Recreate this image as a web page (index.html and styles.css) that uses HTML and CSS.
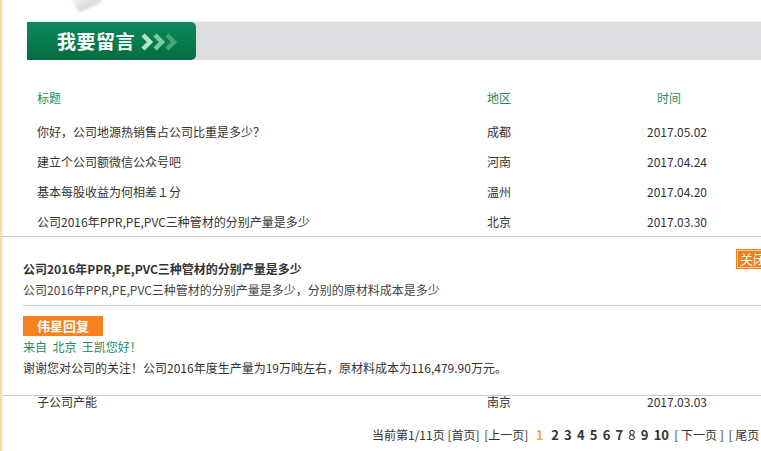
FILE: index.html
```html
<!DOCTYPE html>
<html lang="zh-CN">
<head>
<meta charset="utf-8">
<title>我要留言</title>
<link rel="stylesheet" href="styles.css">
</head>
<body>
<div class="deco-shadow"></div>
<div class="page">
  <div class="title-bar">
    <div class="tab">
      <span class="tab-text">我要留言</span>
      <svg class="chevrons" width="38" height="18" viewBox="0 0 38 18">
        <polyline points="2,2 9,9 2,16" fill="none" stroke="#b6e4c9" stroke-width="4.5"/>
        <polyline points="14,2 21,9 14,16" fill="none" stroke="#7ccaa0" stroke-width="4.5"/>
        <polyline points="26,2 33,9 26,16" fill="none" stroke="#3fa877" stroke-width="4.5"/>
      </svg>
    </div>
  </div>

  <div class="table">
    <div class="row head">
      <span class="c-title">标题</span>
      <span class="c-area">地区</span>
      <span class="c-time">时间</span>
    </div>
    <div class="row"><span class="c-title">你好，公司地源热销售占公司比重是多少？</span><span class="c-area">成都</span><span class="c-time">2017.05.02</span></div>
    <div class="row"><span class="c-title">建立个公司额微信公众号吧</span><span class="c-area">河南</span><span class="c-time">2017.04.24</span></div>
    <div class="row"><span class="c-title">基本每股收益为何相差１分</span><span class="c-area">温州</span><span class="c-time">2017.04.20</span></div>
    <div class="row"><span class="c-title">公司2016年PPR,PE,PVC三种管材的分别产量是多少</span><span class="c-area">北京</span><span class="c-time">2017.03.30</span></div>
    <div class="row"></div>
    <div class="row"></div>
    <div class="row"></div>
    <div class="row"></div>
    <div class="row"></div>
    <div class="row"><span class="c-title">子公司产能</span><span class="c-area">南京</span><span class="c-time">2017.03.03</span></div>
  </div>

  <div class="pager">
    <span>当前第1/11页</span>
    <a>[首页]</a>
    <a>[上一页]</a>
    <b class="cur">1</b>
    <b>2</b><b>3</b><b>4</b><b>5</b><b>6</b><b>7</b><b class="visited">8</b><b>9</b><b>10</b>
    <a>[&nbsp;下一页&nbsp;]</a>
    <a>[&nbsp;尾页&nbsp;]</a>
  </div>
</div>

<div class="modal">
  <button class="close">关闭</button>
  <div class="q-title">公司2016年PPR,PE,PVC三种管材的分别产量是多少</div>
  <div class="q-desc">公司2016年PPR,PE,PVC三种管材的分别产量是多少，分别的原材料成本是多少</div>
  <div class="sep"></div>
  <div class="reply-tag">伟星回复</div>
  <div class="reply-from">来自&nbsp;&nbsp;北京&nbsp;&nbsp;王凯您好！</div>
  <div class="reply-text">谢谢您对公司的关注！公司2016年度生产量为19万吨左右，原材料成本为116,479.90万元。</div>
</div>
</body>
</html>
```

FILE: styles.css
```css
html, body {
  margin: 0;
  padding: 0;
  overflow: hidden;
}
body {
  position: relative;
  width: 761px;
  height: 451px;
  background: linear-gradient(to right, #eed9a6 0, #f6e6bd 2px, #fdf8ec 3px, #ffffff 4px);
  font-family: "Microsoft YaHei", "Noto Sans CJK SC", sans-serif;
  font-size: 12px;
  color: #333;
}

.deco-shadow {
  position: absolute;
  left: 74px;
  top: -8px;
  width: 26px;
  height: 16px;
  border-radius: 3px;
  background: linear-gradient(to bottom, #f4f4f4, #d8d8d8);
  transform: rotate(-25deg);
  filter: blur(1px);
}

.page {
  padding: 22px 0 0 27px;
}

.title-bar {
  height: 38px;
  width: 760px;
  background: #dcdde0;
  border-top: 1px solid #f2f3f5;
  margin-top: -1px;
  display: flex;
}
.tab {
  width: 169px;
  height: 38px;
  border-radius: 0 5px 5px 0;
  background: linear-gradient(to bottom, #0b8a5c 0%, #07794b 60%, #056c3f 100%);
  display: flex;
  align-items: center;
  padding-left: 30px;
  box-sizing: border-box;
}
.tab-text {
  color: #fff;
  font-size: 19px;
  font-weight: bold;
  letter-spacing: 0.5px;
  line-height: 38px;
}
.chevrons {
  margin-left: 6px;
  margin-top: 1px;
}

.table {
  padding-top: 23px;
  width: 740px;
}
.row {
  display: flex;
  height: 30px;
  line-height: 30px;
  white-space: nowrap;
}
.row.head {
  margin-bottom: 4px;
  color: #2a8a5c;
}
.c-title {
  width: 450px;
  padding-left: 10px;
  overflow: hidden;
}
.c-area {
  width: 160px;
}
.c-time {
  width: 100px;
}
.head .c-time {
  padding-left: 10px;
}

.pager {
  margin-top: 8px;
  padding-left: 345px;
  line-height: 20px;
  white-space: nowrap;
  color: #333;
}
.pager a {
  margin-right: 2px;
}
.pager b {
  margin: 0 2.6px;
  font-size: 13px;
  color: #333;
}
.pager b.cur {
  color: #f5a447;
}
.pager b.visited {
  font-weight: normal;
}

.modal {
  position: absolute;
  left: 3px;
  top: 236px;
  width: 780px;
  height: 160px;
  background: #fff;
  border-top: 1px solid #c8c8c8;
  border-bottom: 1px solid #c8c8c8;
  padding: 21px 0 0 20px;
  box-sizing: border-box;
}
.modal::before {
  content: "";
  position: absolute;
  left: -3px;
  top: -1px;
  width: 3px;
  border-top: 1px solid #c8c8c8;
}
.close {
  position: absolute;
  left: 733px;
  top: 12px;
  width: 40px;
  height: 20px;
  padding: 0 0 0 3px;
  text-align: left;
  background: #f08219;
  border: 1px solid #f08219;
  box-shadow: inset 0 0 0 1px #fbd0a0;
  color: #fff;
  font-family: inherit;
  font-size: 13px;
  line-height: 16px;
}
.q-title {
  font-weight: bold;
  line-height: 21px;
  color: #333;
}
.q-desc {
  line-height: 21px;
  color: #444;
}
.sep {
  margin-top: 5px;
  border-top: 1px solid #d0d0d0;
}
.reply-tag {
  margin-top: 10px;
  width: 80px;
  height: 20px;
  line-height: 20px;
  background: #f5821f;
  color: #fff;
  font-weight: bold;
  font-size: 13px;
  text-align: center;
}
.reply-from {
  line-height: 21px;
  color: #1f8a5c;
}
.reply-text {
  line-height: 21px;
  color: #333;
}
```
